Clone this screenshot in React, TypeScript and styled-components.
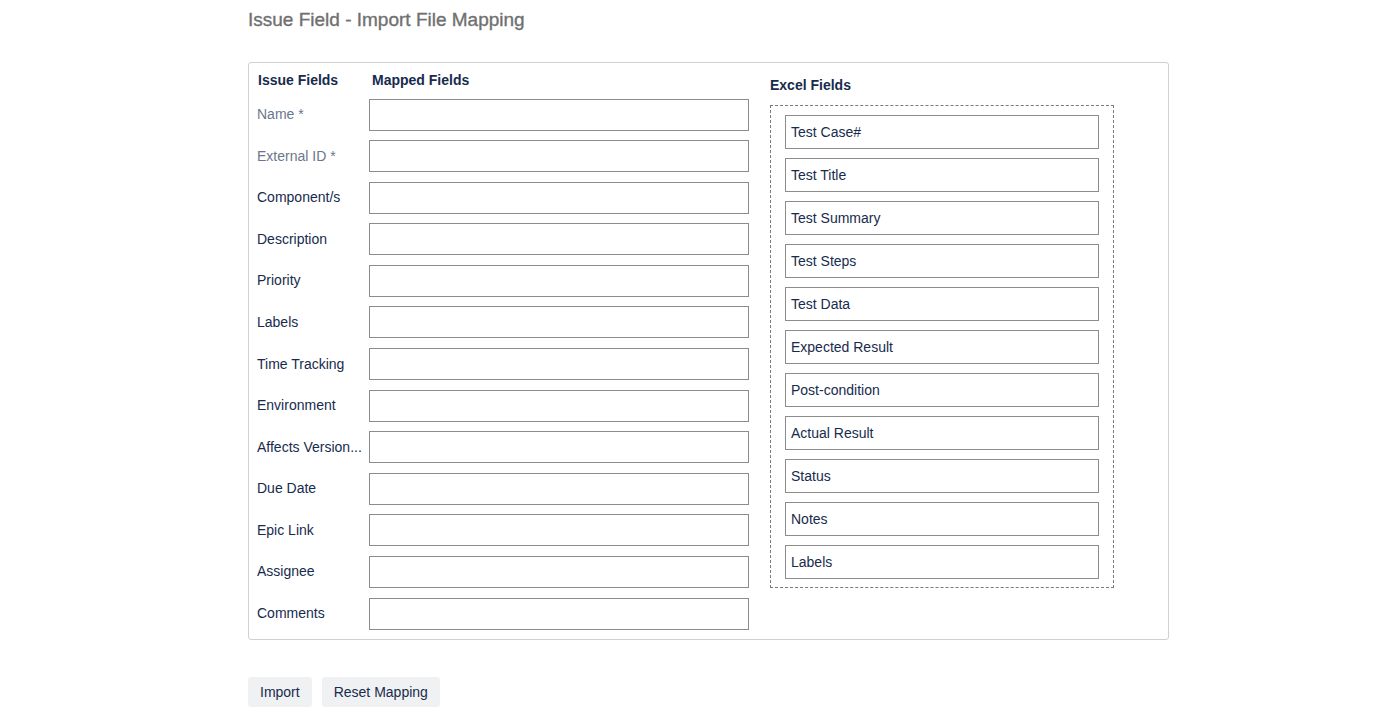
import React from "react";
import styled, { createGlobalStyle } from "styled-components";

const GlobalStyle = createGlobalStyle`
  html, body { margin: 0; padding: 0; background: #fff; }
  body { font-family: "Liberation Sans", Arial, Helvetica, sans-serif; color: #172b4d; }
  * { box-sizing: border-box; }
`;

const Page = styled.div`
  padding: 9px 0 0 248px;
  width: 1169px;
`;

const Title = styled.h1`
  margin: 0;
  font-size: 19px;
  line-height: 22px;
  font-weight: 400;
  color: #707070;
  -webkit-text-stroke: 0.35px #707070;
`;

const Card = styled.div`
  margin-top: 31px;
  width: 921px;
  height: 578px;
  border: 1px solid #d0d0d0;
  border-radius: 3px;
  padding: 9px 0 10px 8px;
  display: flex;
  gap: 21px;
`;

const MappingGrid = styled.div`
  display: grid;
  grid-template-columns: 112px 380px;
  grid-template-rows: 17px;
  grid-auto-rows: 32px;
  row-gap: 9.58px;
  align-items: center;
`;

const HeaderCell = styled.div<{ $indent?: number }>`
  font-size: 14px;
  font-weight: 700;
  line-height: 17px;
  padding-left: ${(p) => p.$indent ?? 0}px;
  color: #172b4d;
`;

const Label = styled.div<{ $muted?: boolean }>`
  font-size: 14px;
  line-height: 17px;
  color: ${(p) => (p.$muted ? "#6b778c" : "#172b4d")};
  white-space: nowrap;
  overflow: hidden;
  text-overflow: ellipsis;
`;

const MapInput = styled.div`
  height: 32px;
  border: 1px solid #8c8c8c;
  background: #fff;
`;

const ExcelColumn = styled.div`
  display: flex;
  flex-direction: column;
  padding-top: 5px;
`;

const ExcelTitle = styled.div`
  font-size: 14px;
  font-weight: 700;
  line-height: 17px;
  color: #172b4d;
  margin-bottom: 11px;
`;

const DropZone = styled.div`
  width: 344px;
  border: 1px dashed #7a7a7a;
  padding: 9px 14px 8px;
  display: flex;
  flex-direction: column;
  gap: 9px;
`;

const ExcelItem = styled.div`
  height: 34px;
  border: 1px solid #8c8c8c;
  padding-left: 5px;
  display: flex;
  align-items: center;
  font-size: 14px;
  color: #172b4d;
`;

const Actions = styled.div`
  display: flex;
  gap: 10px;
  margin-top: 37px;
`;

const Button = styled.button`
  height: 30px;
  padding: 0 12px;
  border: none;
  border-radius: 3px;
  background: #f0f1f2;
  font-family: inherit;
  font-size: 14px;
  color: #172b4d;
  cursor: pointer;
`;

const issueFields: { name: string; muted?: boolean }[] = [
  { name: "Name *", muted: true },
  { name: "External ID *", muted: true },
  { name: "Component/s" },
  { name: "Description" },
  { name: "Priority" },
  { name: "Labels" },
  { name: "Time Tracking" },
  { name: "Environment" },
  { name: "Affects Version..." },
  { name: "Due Date" },
  { name: "Epic Link" },
  { name: "Assignee" },
  { name: "Comments" },
];

const excelFields = [
  "Test Case#",
  "Test Title",
  "Test Summary",
  "Test Steps",
  "Test Data",
  "Expected Result",
  "Post-condition",
  "Actual Result",
  "Status",
  "Notes",
  "Labels",
];

export default function App() {
  return (
    <>
      <GlobalStyle />
      <Page>
        <Title>Issue Field - Import File Mapping</Title>
        <Card>
          <MappingGrid>
            <HeaderCell $indent={1}>Issue Fields</HeaderCell>
            <HeaderCell $indent={3}>Mapped Fields</HeaderCell>
            {issueFields.map((f) => (
              <React.Fragment key={f.name}>
                <Label $muted={f.muted}>{f.name}</Label>
                <MapInput />
              </React.Fragment>
            ))}
          </MappingGrid>
          <ExcelColumn>
            <ExcelTitle>Excel Fields</ExcelTitle>
            <DropZone>
              {excelFields.map((f) => (
                <ExcelItem key={f}>{f}</ExcelItem>
              ))}
            </DropZone>
          </ExcelColumn>
        </Card>
        <Actions>
          <Button>Import</Button>
          <Button>Reset Mapping</Button>
        </Actions>
      </Page>
    </>
  );
}
